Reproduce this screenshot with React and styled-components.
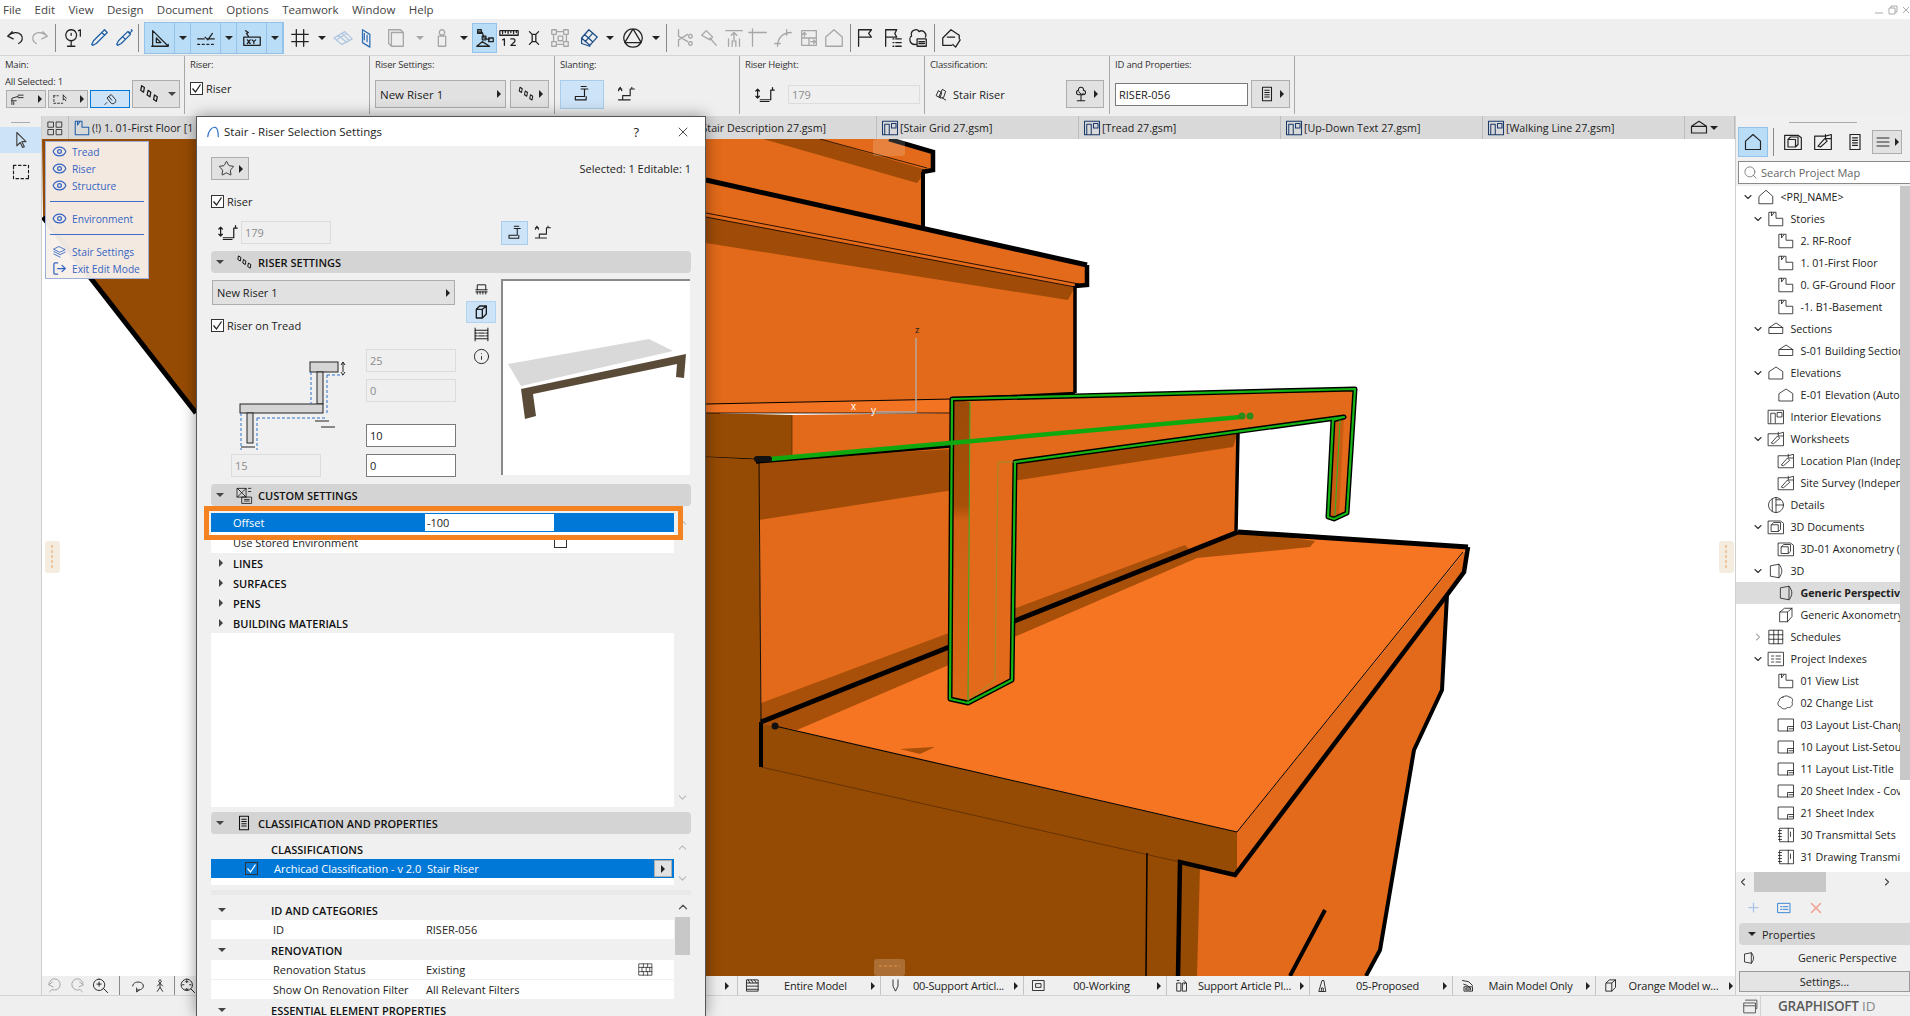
import React from 'react';
import styled, { createGlobalStyle } from 'styled-components';
import { Eye, LogOut, ChevronDown, ChevronRight, ChevronUp, ChevronLeft, Search, X, Plus, Star, Info } from 'lucide-react';

const GlobalStyle = createGlobalStyle`
  html, body { margin: 0; padding: 0; background: #efefef; }
  * { box-sizing: border-box; }
  body { font-family: "Open Sans", "Noto Sans", sans-serif; font-size: 11px; color: #1c1c1c; }
`;

const Page = styled.div`
  position: relative;
  width: 1910px;
  height: 1016px;
  display: flex;
  flex-direction: column;
  overflow: hidden;
  background: #efefef;
`;

const MenuBar = styled.div`
  height: 19px;
  background: #fff;
  display: flex;
  align-items: center;
  padding-left: 3px;
  gap: 13.4px;
  font-size: 11.5px;
  color: #444;
`;

const WinControls = styled.div`
  margin-left: auto;
  display: flex;
  align-items: center;
  padding-right: 1px;
`;

const Toolbar = styled.div`
  height: 37px;
  display: flex;
  align-items: center;
  border-bottom: 1px solid #d4d4d4;
  padding-top: 2px;
`;

const Cell = styled.div`
  width: ${p => p.$w}px;
  height: 30px;
  flex: none;
  display: flex;
  align-items: center;
  justify-content: center;
  color: ${p => p.$color || '#222'};
  opacity: ${p => (p.$faded ? 0.35 : 1)};
  background: ${p => (p.$on ? '#b9dcf7' : 'transparent')};
  border: ${p => (p.$on ? '1px solid #93c3ea' : 'none')};
  margin-left: ${p => p.$ml || 0}px;
`;

const BarSep = styled.div`
  width: ${p => p.$w}px;
  flex: none;
  height: 28px;
  display: flex;
  justify-content: center;
  &::after { content: ''; width: 1px; background: #8a8a8a; }
`;

const Tri = styled.span`
  display: inline-block;
  flex: none;
  width: 0;
  height: 0;
  border-style: solid;
  ${p => (p.$right
    ? `border-width: 4px 0 4px 4px; border-color: transparent transparent transparent ${p.$c || '#222'};`
    : `border-width: 4px 4px 0 4px; border-color: ${p.$c || '#222'} transparent transparent transparent;`)}
`;

const SnapGroup = styled.div`
  display: flex;
  margin-left: 4px;
  background: #b9dcf7;
  border: 1px solid #93c3ea;
  & > div { height: 30px; border-right: 1px solid #93c3ea; }
`;

const InfoBox = styled.div`
  height: 60px;
  display: flex;
`;

const InfoSection = styled.div`
  width: 185px;
  flex: none;
  border-right: 1px solid #a8a8a8;
  padding: 3px 5px 0;
  margin-bottom: 2px;
`;

const InfoLabel = styled.div`
  font-size: 9.5px;
  letter-spacing: -0.2px;
  color: #333;
  line-height: 12px;
`;

const InfoRow = styled.div`
  display: flex;
  align-items: center;
  gap: ${p => p.$gap || 0}px;
  margin-top: ${p => p.$mt || 0}px;
  padding-left: ${p => p.$pl || 0}px;
`;

const MainBody = styled.div`
  display: flex;
  align-items: flex-end;
  margin-top: 5px;
`;

const MainLeft = styled.div`
  width: 127px;
  flex: none;
`;

const SmallBtn = styled.div`
  width: ${p => p.$w}px;
  height: ${p => p.$h || 28}px;
  flex: none;
  display: flex;
  align-items: center;
  justify-content: ${p => (p.$between ? 'space-between' : 'center')};
  gap: 4px;
  padding: 0 ${p => p.$pad ?? 3}px;
  background: ${p => (p.$on ? '#cde3f7' : '#e1e1e1')};
  border: 1px solid ${p => (p.$on ? (p.$strong ? '#0078d7' : '#a8cdec') : '#adadad')};
  font-size: 11.5px;
`;

const BtnDivider = styled.span`
  width: 1px;
  height: 22px;
  background: #adadad;
`;

const TextField = styled.div`
  width: ${p => p.$w}px;
  height: ${p => p.$h || 23}px;
  flex: none;
  display: flex;
  align-items: center;
  padding-left: 3px;
  font-size: 11px;
  background: ${p => (p.$off ? '#efefef' : '#fff')};
  border: 1px solid ${p => (p.$off ? '#dcdcdc' : '#7a7a7a')};
  color: ${p => (p.$off ? '#8c8c8c' : '#1c1c1c')};
`;

const CheckBox = styled.span`
  width: 13px;
  height: 13px;
  flex: none;
  display: flex;
  align-items: center;
  justify-content: center;
  background: ${p => p.$bg || '#fff'};
  border: 1px solid #333;
`;

const Main = styled.div`
  flex: 1;
  min-height: 0;
  display: flex;
`;

const LeftDock = styled.div`
  width: 42px;
  flex: none;
  background: #efefef;
  border-right: 1px solid #cfcfcf;
`;

const Grip = styled.div`
  width: ${p => p.$w}px;
  height: 1px;
  background: #aaa;
  margin: 6px auto 4px;
`;

const DockTool = styled.div`
  height: 26px;
  display: flex;
  align-items: center;
  justify-content: center;
  margin-bottom: 6px;
  background: ${p => (p.$on ? '#cde3f7' : 'transparent')};
`;

const Center = styled.div`
  flex: 1;
  min-width: 0;
  display: flex;
  flex-direction: column;
`;

const TabBar = styled.div`
  height: 23px;
  flex: none;
  display: flex;
  background: #d9d9d9;
`;

const Tab = styled.div`
  width: ${p => p.$w}px;
  flex: none;
  display: flex;
  align-items: center;
  gap: 1px;
  padding-left: 4px;
  border-right: 1px solid #bdbdbd;
  font-size: 10.7px;
  color: #222;
  white-space: nowrap;
  overflow: hidden;
`;

const Viewport = styled.div`
  position: relative;
  flex: 1;
  min-height: 0;
  background: #fff;
`;

const Scene = styled.svg`
  display: block;
  width: 100%;
  height: 100%;
`;

const Popup = styled.div`
  position: absolute;
  left: 3px;
  top: 2px;
  width: 104px;
  height: 138px;
  padding: 1px 4px;
  background: rgba(248, 239, 233, 0.96);
  border: 1px solid #9cb0d8;
  color: #3565c4;
  font-size: 10.2px;
  white-space: nowrap;
`;

const PopItem = styled.div`
  height: 17px;
  display: flex;
  align-items: center;
  gap: 5px;
  padding-left: 2px;
`;

const PopLine = styled.div`
  height: 1px;
  background: #3f6cc4;
  margin: 7px 0 8px;
`;

const StatusBar = styled.div`
  height: 19px;
  flex: none;
  display: flex;
  background: #efefef;
`;

const NavTools = styled.div`
  width: 154px;
  flex: none;
  display: flex;
  align-items: center;
  padding-left: 1px;
`;

const StatusGap = styled.div`
  width: 542px;
  flex: none;
  display: flex;
  align-items: center;
  justify-content: flex-end;
  border-right: 1px solid #c4c4c4;
  padding-right: 8px;
`;

const StatusCell = styled.div`
  width: 143px;
  flex: none;
  display: flex;
  align-items: center;
  padding: 0 5px 0 7px;
  border-right: 1px solid #c4c4c4;
  font-size: 11px;
  letter-spacing: -0.2px;
  white-space: nowrap;
`;

const StatusText = styled.span`
  flex: 1;
  text-align: center;
  padding: 0 3px;
  overflow: hidden;
`;

const RightPanel = styled.div`
  width: 175px;
  flex: none;
  display: flex;
  flex-direction: column;
  background: #f0f0f0;
  border-left: 1px solid #cfcfcf;
`;

const PanelHead = styled.div`
  height: 45px;
  flex: none;
`;

const PanelIcons = styled.div`
  display: flex;
  align-items: center;
  height: 29px;
  padding-left: 2px;
  margin-top: 3px;
`;

const SearchBox = styled.div`
  height: 23px;
  flex: none;
  margin: 0 0 2px 2px;
  display: flex;
  align-items: center;
  gap: 3px;
  padding-left: 4px;
  background: #fff;
  border: 1px solid #8a8a8a;
  border-right: none;
  color: #666;
  font-size: 11px;
`;

const TreeWrap = styled.div`
  height: 686px;
  flex: none;
  display: flex;
`;

const Tree = styled.div`
  width: 164px;
  flex: none;
  background: #fff;
  overflow: hidden;
`;

const TreeRow = styled.div`
  height: 22px;
  display: flex;
  align-items: center;
  padding-left: ${p => 2 + p.$level * 10}px;
  background: ${p => (p.$sel ? '#dcdcdc' : 'transparent')};
  font-weight: ${p => (p.$sel ? 700 : 400)};
  font-size: 10.7px;
  color: #222;
  white-space: nowrap;
`;

const Chevron = styled.span`
  width: 19px;
  flex: none;
  display: flex;
  justify-content: center;
  color: ${p => p.$c || '#333'};
`;

const TreeIcon = styled.span`
  width: 20px;
  height: 18px;
  flex: none;
  margin-right: 3.5px;
  display: flex;
  align-items: center;
`;

const VScroll = styled.div`
  width: 10px;
  flex: none;
  display: flex;
  flex-direction: column;
  background: #fff;
`;

const VThumb = styled.div`
  height: ${p => p.$h}px;
  background: #c8c8c8;
`;

const HScroll = styled.div`
  height: 20px;
  flex: none;
  display: flex;
  align-items: center;
  padding-left: 1px;
  color: #444;
`;

const HThumb = styled.div`
  width: 72px;
  height: 100%;
  background: #c8c8c8;
  margin: 0 55px 0 5px;
`;

const PanelActions = styled.div`
  height: 31px;
  flex: none;
  display: flex;
  align-items: center;
  gap: 15px;
  padding-left: 10px;
`;

const PropsHead = styled.div`
  height: 22px;
  flex: none;
  margin-left: 3px;
  display: flex;
  align-items: center;
  gap: 6px;
  padding-left: 9px;
  background: #d6d6d6;
  border-radius: 4px 0 0 4px;
  font-size: 11px;
`;

const PropsRow = styled.div`
  height: 26px;
  flex: none;
  display: flex;
  align-items: center;
  padding-left: 6px;
  font-size: 10.7px;
`;

const PropsName = styled.span`
  margin-left: 42px;
`;

const SettingsBtn = styled.div`
  height: 21px;
  flex: none;
  margin-left: 3px;
  display: flex;
  align-items: center;
  justify-content: center;
  background: #e4e4e4;
  border: 1px solid #9a9a9a;
  font-size: 11px;
`;

const BottomBar = styled.div`
  height: 21px;
  flex: none;
  display: flex;
  align-items: center;
  justify-content: flex-end;
  border-top: 1px solid #d2d2d2;
  background: #efefef;
`;

const IdBlock = styled.div`
  width: 168px;
  height: 100%;
  display: flex;
  align-items: center;
  font-size: 13.5px;
  letter-spacing: -0.2px;
  font-weight: 600;
  color: #5a5a5a;
`;

const IdIcon = styled.span`
  width: 19px;
  height: 100%;
  margin-right: 17px;
  display: flex;
  align-items: center;
  border-right: 1px solid #d2d2d2;
`;

const IdLight = styled.span`
  font-weight: 400;
  color: #888;
`;

const Dialog = styled.div`
  position: absolute;
  left: 196px;
  top: 116px;
  width: 510px;
  height: 900px;
  background: #f0f0f0;
  border: 1px solid #565656;
  border-bottom: none;
  box-shadow: 0 0 14px rgba(0, 0, 0, 0.4);
  overflow: hidden;
`;

const DialogTitle = styled.div`
  height: 29px;
  background: #fff;
  display: flex;
  align-items: center;
  padding-left: 9px;
  gap: 4px;
  font-size: 11.5px;
  color: #222;
`;

const TitleButtons = styled.div`
  margin-left: auto;
  display: flex;
  align-items: center;
  gap: 36px;
  padding-right: 14px;
  font-size: 13px;
`;

const DialogBody = styled.div`
  padding: 0 14px;
`;

const FavRow = styled.div`
  margin-top: 11px;
  display: flex;
  align-items: center;
  justify-content: space-between;
  font-size: 11px;
`;

const CheckRow = styled.label`
  display: flex;
  align-items: center;
  gap: 3px;
  height: 13px;
  font-size: 11px;
  margin-top: ${p => p.$mt}px;
`;

const HeightRow = styled.div`
  margin-top: 13px;
  height: 23px;
  display: flex;
  align-items: center;
  padding-left: 7px;
`;

const HGap = styled.span`
  width: ${p => p.$w}px;
  flex: none;
`;

const SectionHead = styled.div`
  height: 22px;
  margin-top: ${p => p.$mt}px;
  display: flex;
  align-items: center;
  padding-left: 5px;
  background: #d4d4d4;
  border-radius: 4px;
  font-weight: 600;
  font-size: 11px;
  color: #111;
`;

const HeadIcon = styled.span`
  width: 22px;
  margin: 0 3px 0 9px;
  display: flex;
  justify-content: center;
`;

const RiserBlock = styled.div`
  margin-top: 6px;
  display: flex;
`;

const RiserLeft = styled.div`
  width: 244px;
  flex: none;
`;

const Dropdown = styled.div`
  height: 25px;
  margin: 1px 0 0 1px;
  display: flex;
  align-items: center;
  justify-content: space-between;
  padding: 0 4px;
  background: #e1e1e1;
  border: 1px solid #adadad;
  font-size: 11px;
`;

const DiagramGrid = styled.div`
  margin-top: 17px;
  display: flex;
`;

const DiagramCol = styled.div`
  width: 155px;
  flex: none;
`;

const DiagramSvg = styled.svg`
  display: block;
  width: 155px;
  height: 105px;
`;

const Indented = styled.div`
  margin-left: 20px;
`;

const FieldCol = styled.div`
  width: 89px;
`;

const FieldGap = styled.div`
  height: ${p => p.$h}px;
`;

const SideIcons = styled.div`
  width: 30px;
  margin-left: 11px;
  flex: none;
`;

const SideIcon = styled.div`
  height: 22px;
  display: flex;
  align-items: center;
  justify-content: center;
  background: ${p => (p.$on ? '#cde3f7' : 'transparent')};
  border: ${p => (p.$on ? '1px solid #b3d4ef' : 'none')};
`;

const PreviewBox = styled.div`
  width: 189px;
  height: 196px;
  margin-left: 5px;
  background: #fff;
  border-top: 2px solid #8a8a8a;
  border-left: 2px solid #8a8a8a;
`;

const PreviewSvg = styled.svg`
  display: block;
  width: 187px;
  height: 194px;
`;

const CustomList = styled.div`
  position: relative;
  margin-top: 7px;
  height: 294px;
  display: flex;
`;

const ListMain = styled.div`
  width: 463px;
  flex: none;
  background: #fff;
`;

const ListScroll = styled.div`
  flex: 1;
  display: flex;
  flex-direction: column;
  align-items: center;
  justify-content: space-between;
  color: #b8b8b8;
  padding: ${p => p.$pad};
`;

const OrangeFrame = styled.div`
  position: absolute;
  left: -7px;
  top: -7px;
  width: 479px;
  height: 34px;
  border: 5px solid #f58220;
  pointer-events: none;
`;

const OffsetRow = styled.div`
  position: relative;
  height: 19px;
  display: flex;
  align-items: center;
  background: #0078d7;
  color: #fff;
  padding-left: 22px;
  font-size: 11px;
`;

const OffsetInput = styled.div`
  position: absolute;
  left: 214px;
  top: 1px;
  width: 129px;
  height: 17px;
  padding-left: 2px;
  display: flex;
  align-items: center;
  background: #fff;
  color: #222;
`;

const PlainRow = styled.div`
  position: relative;
  height: 21px;
  display: flex;
  align-items: center;
  background: #fff;
  padding-left: 22px;
  font-size: 11px;
`;

const SmallBox = styled.span`
  position: absolute;
  left: 343px;
  top: 3px;
  width: 13px;
  height: 13px;
  background: #fff;
  border: 1px solid #333;
`;

const GroupRow = styled.div`
  height: 20px;
  display: flex;
  align-items: center;
  background: #f0f0f0;
  font-weight: 600;
  font-size: 11px;
  color: #111;
  padding-left: ${p => p.$pl || 7}px;
  gap: ${p => p.$gap || 0}px;
`;

const GroupTitle = styled.span`
  margin-left: ${p => p.$ml || 45}px;
`;

const ClassList = styled.div`
  margin-top: 5px;
  height: 46px;
  display: flex;
`;

const ClassRow = styled.div`
  height: 19px;
  display: flex;
  align-items: center;
  background: #0078d7;
  color: #fff;
  font-size: 11px;
  padding-left: 34px;
`;

const ClassName = styled.span`
  width: 153px;
  margin-left: 16px;
`;

const ClassBtn = styled.span`
  margin-left: auto;
  margin-right: 2px;
  width: 18px;
  height: 17px;
  display: flex;
  align-items: center;
  justify-content: center;
  background: #e1e1e1;
  border: 1px solid #adadad;
`;

const ThinSep = styled.div`
  height: 5px;
  margin-top: 5px;
  background: #e9e9e9;
`;

const PropList = styled.div`
  margin-top: 5px;
  display: flex;
`;

const PropRow = styled.div`
  height: 20px;
  display: flex;
  align-items: center;
  background: #fff;
  border-bottom: 1px solid #f0f0f0;
  padding-left: 62px;
  font-size: 11px;
`;

const PropKey = styled.span`
  width: 153px;
  flex: none;
`;

const PropVal = styled.span`
  width: 211px;
  flex: none;
`;

const PropScroll = styled.div`
  flex: 1;
  display: flex;
  flex-direction: column;
  align-items: center;
  color: #555;
`;

const PropThumb = styled.div`
  margin-top: 3px;
  width: 15px;
  height: 38px;
  background: #c8c8c8;
`;

const ClassValue = styled.span`
  flex: 1;
  margin-left: 4px;
  font-size: 11px;
`;

const Ico = styled.svg`
  display: block;
  flex: none;
  fill: none;
  stroke: currentColor;
  stroke-width: ${p => p.$sw || 1.4};
  stroke-linecap: round;
  stroke-linejoin: round;
`;

const paths = {
  undo: 'M9 5 4 10l6 3M4 10c5-5 12-5 15-1 2 3 1 7-3 9',
  redo: 'M15 5l5 5-6 3M20 10c-5-5-12-5-15-1-2 3-1 7 3 9',
  find: 'M10 3a6 6 0 1 0 .01 0M10 7v2M10 15v5M6 21h8M18 4l2-1v7',
  dropper: 'M18 3l3 3-3 3-3-3zM15 6l3 3-9 9-4 2-1-1 2-4z',
  syringe: 'M20 3l1 1-3 3M17 5l2 2M16 5l3 3-10 10-4 2-1-1 2-4zM11 11l2 2',
  tri: 'M4 4v17h17zM8 12v5h5zM3 21h3M21 21v-2',
  snap: 'M3 13h7M14 13h7M3 19h2M8 19h2M13 19h2M18 19h2M11 11l3 3 5-7',
  xy: 'M5 4l3 2-2 1 2 3M3 11h18v9H3zM7 14l3 4M10 14l-3 4M12 14l2 2v2M16 14l-2 2',
  grid: 'M8 3v18M16 3v18M3 8h18M3 16h18',
  plane: 'M2 12l12-7 8 8-11 6zM7 9l9 8M11 7l8 8M5 14l11-7',
  wall: 'M6 3l8 5v14l-8-5zM8 7v7M11 9v7',
  box: 'M4 3h13l3 3v15H7l-3-3zM7 6h13M7 6v15',
  person: 'M12 3a3 3 0 1 0 .01 0M8 21v-11h8v11z',
  guide: 'M4 5l5 1 2 6 6 2M4 3h4v4H4zM9 10h4v4H9zM16 12h5v4h-5zM3 21l6-5 8 5z',
  ruler: 'M2 4h20v5H2zM5 4v3M8 4v2M11 4v3M14 4v2M17 4v3M20 4v2M7 13v7M5 14l2-1M14 13h3c2 0 2 3 0 4l-3 3h5',
  target: 'M7 5l3 3h4l3-3M7 19l3-3h4l3 3M10 8v8M14 8v8',
  faded: 'M3 3h5v5H3zM16 3h5v5h-5zM3 16h5v5H3zM16 16h5v5h-5zM10 10h5v5h-5zM8 5h8M5 8v8M19 8v8M8 19h8',
  diamond: 'M13 3l9 8-8 9-9-8zM5 12v6l9 3M8 8l9 8M17 7l-8 9',
  shapes: 'M12 2a10 10 0 1 0 .01 0M12 2L3 17M12 2l9 15M4 17h16',
  scissors: 'M6 3v7M6 15v6M6 10l10 6M6 14l10-6M19 8a2 2 0 1 0 .01 0M19 16a2 2 0 1 0 .01 0',
  hammer: 'M4 9l5-5 7 7-3 3zM13 12l7 8',
  trimTop: 'M3 4h18M12 6v10M9 9l3-3 3 3M6 13v8M10 15v6M14 15v6M18 13v8',
  corner: 'M6 21V6h15M6 2v4M2 6h4',
  arc: 'M6 21c0-9 6-15 15-15M3 18h6M16 3v6',
  panel: 'M4 4h16v16H4zM4 12h16M12 12v8M7 10V7M5 8l2-2 2 2M14 16h5M17 14l2 2-2 2',
  house: 'M3 11l9-8 9 8v10H3z',
  flag: 'M5 21V3h14l-3 4 3 4H5',
  flagList: 'M4 21V3h12l-2 4 2 4H4M12 13h1M15 13h6M12 17h1M15 17h6M12 21h1M15 21h6',
  cloud: 'M10 19c-8 1-8-8-5-9-2-7 7-9 8-5 5-3 9 3 7 6M11 13h10v8H11zM13 16h6M13 18h6',
  houseCheck: 'M3 12l9-9 9 6v4M3 12v8h10M8 11h8M14 19l3 3 5-8',
  stair: 'M4 15h11V6M11 6h8M11 3h6M4 19h13M4 15v4M17 15v4',
  slant: 'M3 19h14M17 14h-9v5M17 14V6h5M19 4v2M3 8l2-4 2 4M3 6h4',
  riserH: 'M3 6v10M1 8l2-2 2 2M1 14l2 2 2-2M6 18h12V7h4M20 4v3M6 20h10',
  leaves: 'M5 14l3-7 5 3-2 7zM9 16l5-11 5 3-3 9-4 1zM14 18l5 3',
  tree: 'M12 21v-9M7 21h10M12 3c-3 0-4 3-3 4-4 0-4 6 0 6h6c4 0 4-6 0-6 1-1 0-4-3-4M12 12l-3-3M12 14l3-3',
  doc: 'M6 3h12v18H6zM9 7h6M9 10h6M9 13h6M9 16h6',
  menu: 'M3 6h18M3 12h18M3 18h18',
  tiles: 'M3 4h7v7H3zM14 4h7v7h-7zM3 14h7v7H3zM14 14h7v7h-7z',
  story: 'M3 3h9v8h9v10H3zM6 3v5l3-4',
  cursor: 'M7 3v16l4-4 3 6 2-1-3-6h5z',
  marquee: 'M3 4h3M9 4h3M15 4h3M21 4v3M21 10v3M21 16v3M18 20h3M12 20h3M6 20h3M3 20v-3M3 14v-3M3 8V4',
  marqueeArrow: 'M3 6h2M8 6h2M3 6v3M3 12v3M3 18h3M9 18h3M15 18h2M18 5v8l2-2 2 3M18 5l5 5',
  plank: 'M3 20V10l10-3M13 5h8M13 9h8M3 14h7M6 20v-4',
  magnet: 'M7 9l6-5 7 8c2 4-3 9-7 6zM9 7l5 6M3 20l3-3',
  stairLeaf: 'M3 8l8-4 10 5-8 4zM3 12l10 5 8-4M3 16l10 5',
  riserSet: 'M4 3l3 2-1 5-3-2zM11 8l3 2-1 5-3-2zM18 13l3 2-1 5-3-2z',
  wheel: 'M4 12c0-8 16-8 16 0 0 6-8 6-10 6M10 15v6l4-3',
  walk: 'M12 3a2 2 0 1 0 .01 0M12 8l-4 4M12 8l4 4M12 8v6l-4 6M12 14l4 6',
  fitAll: 'M11 3a8 8 0 1 0 .01 0M11 6v2M9 7l2-2 2 2M11 18v-2M9 17l2 2 2-2M5 11h2M15 11h2M17 17l5 5',
  zoomIn: 'M10 3a8 8 0 1 0 .01 0M10 7v6M7 10h6M16 16l6 6',
  undoZoom: 'M9 7l-5 4 6 3M4 11a8 8 0 1 1 5 7M8 18l-3 3',
  redoZoom: 'M15 7l5 4-6 3M20 11a8 8 0 1 0-5 7M16 18l3 3',
  hatch: 'M3 3h18v18H3zM3 8h18M3 13h18M3 18h18M5 3l3 5M10 3l3 5M15 3l3 5',
  pen: 'M8 3v10l4 8 4-8V3',
  layerBox: 'M3 4h18v16H3zM8 9h8v6H8z',
  planSet: 'M5 8h6v13H5zM14 8h6v13h-6zM5 4h3M16 4l3 3-3 3',
  reno: 'M3 21l5-17 3 0 3 17zM7 21v-5h3v5',
  modelOnly: 'M4 4l10 2 6 6M6 10l6 2 4 4M7 14h13v7H7zM10 16h7v3h-7z',
  cube: 'M5 8l5-5h10v12l-6 6H5zM5 8h9v13M14 8l6-5',
  section: 'M3 10l9-6 9 6v8H3zM3 10h18',
  elevation: 'M3 10l9-6 9 6v10H3z',
  interior: 'M2 3h20v18H2zM5 20V7h6v13M14 6h6v6h-6z',
  worksheet: 'M2 5h13l7-2v18H2zM6 17l8-9 3 3-8 7zM15 3v5h6',
  detail: 'M12 2a10 10 0 1 0 .01 0M7 4v16M12 2v20M12 12h10M12 5h6',
  doc3d: 'M2 4h16l4 3v14H2zM6 9h9v9H6zM6 9l3-3h9v9l-3 3',
  persp: 'M5 5l11-2c5 6 5 12 0 18L5 19zM16 3v18',
  axono: 'M4 8l6-5h10v11l-6 7H4zM4 8h10v13M14 8l6-5',
  table: 'M3 3h18v18H3zM3 9h18M3 15h18M9 3v18M15 3v18',
  index: 'M2 3h20v18H2zM6 8h3M6 12h3M6 16h3M12 8h6M12 12h6M12 16h6',
  change: 'M8 4c3-2 6-2 8 0 4 0 6 4 4 7 2 4-2 8-6 7-3 3-8 2-9-1-4 0-5-6-2-8 0-3 3-5 5-5z',
  layout: 'M2 4h20v16H2zM14 20v-6h8M16 17h6',
  transmittal: 'M4 3h18v18H4zM2 6h4M2 10h4M2 14h4M2 18h4M15 3v18M18 8v6',
  plusBox: 'M3 5h18v14H3zM7 10h2M7 14h2M11 10h7M11 14h7',
  browser: 'M5 3h16v12h-2M3 7h16v14H3zM3 11h16',
  brick: 'M3 4h18v16H3zM3 9h18M3 15h18M9 4v5M15 4v5M7 9v6M13 9v6M18 9v6M9 15v5M15 15v5',
  plan: 'M6 11V4h12v7M4 11h16M4 14h16M6 14v3M10 14v3M14 14v3M18 14v3',
  film: 'M3 3v18M21 3v18M3 6h18M3 18h18M8 10h8M8 14h8M3 10h3M18 10h3M3 14h3M18 14h3',
  customSet: 'M3 3h11v11H3zM3 3l11 11M14 3L3 14M17 3h3M17 7h3M9 14h12v8H9zM12 17h6M12 19h6',
  arcLogo: 'M3 20C4 10 10 3 16 4c4 1 5 8 5 16',
};

const Icon = ({ name, size = 22, sw, color }) => (
  <Ico viewBox="0 0 24 24" width={size} height={size} $sw={sw} style={color ? { color } : undefined}>
    <path d={paths[name]} />
  </Ico>
);

const topTools = [
  { w: 30, i: 'undo' }, { w: 20, i: 'redo', f: 1 }, { sep: 10 },
  { w: 26, i: 'find' }, { w: 26, i: 'dropper', c: '#1f5fa8' }, { w: 24, i: 'syringe', c: '#1f5fa8' }, { sep: 4 },
];
const snapTools = [
  { w: 30, i: 'tri' }, { w: 16, arrow: 1 }, { w: 30, i: 'snap' }, { w: 16, arrow: 1 }, { w: 30, i: 'xy' }, { w: 16, arrow: 1 },
];
const restTools = [
  { w: 32, i: 'grid' }, { w: 12, arrow: 1 }, { w: 30, i: 'plane', f: 1, c: '#3c7fc8' }, { w: 20, i: 'wall', c: '#2f6fb8' },
  { w: 36, i: 'box', f: 1 }, { w: 12, arrow: 1, f: 1 }, { w: 32, i: 'person', f: 1 }, { w: 12, arrow: 1 },
  { w: 25, i: 'guide', on: 1, ml: 2 }, { w: 24, i: 'ruler' }, { w: 26, i: 'target' }, { w: 26, i: 'faded', f: 1 },
  { w: 30, i: 'diamond', c: '#1f4f8a' }, { w: 14, arrow: 1 }, { w: 32, i: 'shapes' }, { w: 14, arrow: 1 }, { sep: 6 },
  { w: 30, i: 'scissors', f: 1 }, { w: 20, i: 'hammer', f: 1 }, { w: 30, i: 'trimTop', f: 1 }, { w: 18, i: 'corner', f: 1 },
  { w: 32, i: 'arc', f: 1 }, { w: 20, i: 'panel', f: 1 }, { w: 30, i: 'house', f: 1 }, { sep: 2 },
  { w: 28, i: 'flag' }, { w: 28, i: 'flagList' }, { w: 22, i: 'cloud' }, { sep: 10 }, { w: 24, i: 'houseCheck' },
];

const renderTool = (t, k) => {
  if (t.sep) return <BarSep key={k} $w={t.sep} />;
  if (t.arrow) return <Cell key={k} $w={t.w} $faded={t.f}><Tri /></Cell>;
  return <Cell key={k} $w={t.w} $faded={t.f} $on={t.on} $ml={t.ml} $color={t.c}><Icon name={t.i} /></Cell>;
};

const tree = [
  [0, 'o', 'house', '<PRJ_NAME>'],
  [1, 'o', 'story', 'Stories'],
  [2, '', 'story', '2. RF-Roof'],
  [2, '', 'story', '1. 01-First Floor'],
  [2, '', 'story', '0. GF-Ground Floor'],
  [2, '', 'story', '-1. B1-Basement'],
  [1, 'o', 'section', 'Sections'],
  [2, '', 'section', 'S-01 Building Section'],
  [1, 'o', 'elevation', 'Elevations'],
  [2, '', 'elevation', 'E-01 Elevation (Auto)'],
  [1, '', 'interior', 'Interior Elevations'],
  [1, 'o', 'worksheet', 'Worksheets'],
  [2, '', 'worksheet', 'Location Plan (Independent)'],
  [2, '', 'worksheet', 'Site Survey (Independent)'],
  [1, '', 'detail', 'Details'],
  [1, 'o', 'doc3d', '3D Documents'],
  [2, '', 'doc3d', '3D-01 Axonometry (Auto)'],
  [1, 'o', 'persp', '3D'],
  [2, '', 'persp', 'Generic Perspective', true],
  [2, '', 'axono', 'Generic Axonometry'],
  [1, 'c', 'table', 'Schedules'],
  [1, 'o', 'index', 'Project Indexes'],
  [2, '', 'story', '01 View List'],
  [2, '', 'change', '02 Change List'],
  [2, '', 'layout', '03 Layout List-Changes'],
  [2, '', 'layout', '10 Layout List-Setout'],
  [2, '', 'layout', '11 Layout List-Title'],
  [2, '', 'layout', '20 Sheet Index - Cover'],
  [2, '', 'layout', '21 Sheet Index'],
  [2, '', 'transmittal', '30 Transmittal Sets'],
  [2, '', 'transmittal', '31 Drawing Transmittal'],
];

const statusCells = [
  ['hatch', 'Entire Model'], ['pen', '00-Support Articl...'], ['layerBox', '00-Working'], ['planSet', 'Support Article Pl...'],
  ['reno', '05-Proposed'], ['modelOnly', 'Main Model Only'], ['cube', 'Orange Model w...'],
];

const Check = ({ color = '#222' }) => (
  <svg width="11" height="11" viewBox="0 0 11 11"><path d="M1.5 5.5 4.5 9 9.5 1.5" fill="none" stroke={color} strokeWidth="1.3" /></svg>
);

const railPoints = '952,399 1355,389 1347,513 1334,519 1328,517 1333,420 1344,417 1015,462 1012,680 968,703 950,699';

const StairScene = () => (
  <Scene viewBox="42 139 1693 837" preserveAspectRatio="none">
    <defs>
      <linearGradient id="legFace" x1="0" y1="0" x2="0" y2="1">
        <stop offset="0" stopColor="#9c4a08" />
        <stop offset="0.35" stopColor="#a85008" />
        <stop offset="0.4" stopColor="#cf6014" />
        <stop offset="1" stopColor="#dc6818" />
      </linearGradient>
    </defs>
    <polygon points="42,139 720,139 720,600 195,412 43,217" fill="#964b04" />
    <line x1="43" y1="217" x2="196" y2="413" stroke="#000" strokeWidth="5" />

    <polygon points="706,139 889,139 933,152 933,170 923,172 923,228 706,180" fill="#e26a1a" />
    <polygon points="763,139 820,139 927,170 917,183" fill="#a04c08" />
    <polyline points="820,139 927,168" stroke="#3a1a00" strokeWidth="1" fill="none" />
    <polyline points="889,139 933,152 933,170 922,172" stroke="#000" strokeWidth="4.5" fill="none" />
    <line x1="923" y1="172" x2="923" y2="228" stroke="#000" strokeWidth="4" />

    <polygon points="706,180 1086,266 1086,284 1075,285 1075,393 952,401 706,406" fill="#e26a1a" />
    <polygon points="706,217 1075,287 1068,300 706,243" fill="#a04c08" />
    <line x1="706" y1="213" x2="1079" y2="284" stroke="#2a1000" strokeWidth="1" />
    <line x1="706" y1="217" x2="1075" y2="287" stroke="#2a1000" strokeWidth="1" />
    <line x1="706" y1="180" x2="1087" y2="265" stroke="#000" strokeWidth="5" />
    <polyline points="1087,265 1087,285 1075,286" stroke="#000" strokeWidth="4.5" fill="none" />
    <line x1="1075" y1="286" x2="1075" y2="393" stroke="#000" strokeWidth="3.5" />

    <polygon points="706,404 952,399 952,413 706,413" fill="#f27321" />
    <polygon points="706,413 792,415 792,459 756,461 706,459" fill="#964b04" />
    <polygon points="792,415 952,413 952,452 792,461" fill="#e26a1a" />
    <line x1="706" y1="404" x2="952" y2="399" stroke="#000" strokeWidth="1" />
    <line x1="952" y1="399" x2="1075" y2="393" stroke="#000" strokeWidth="2.5" />
    <line x1="706" y1="413" x2="952" y2="413" stroke="#000" strokeWidth="0.8" />
    <line x1="792" y1="415" x2="792" y2="457" stroke="#5a2c00" strokeWidth="0.7" />
    <line x1="706" y1="457" x2="756" y2="459" stroke="#000" strokeWidth="0.8" />

    <polygon points="706,457 759,460 761,722 761,976 706,976" fill="#964b04" />
    <polygon points="759,460 1238,433 1236,532 761,722" fill="#e26a1a" />
    <polygon points="759,460 1238,433 1233,447 759,520" fill="#a04c08" />
    <polygon points="761,703 1185,545 1197,557 761,730" fill="#a84f0a" />
    <line x1="759" y1="460" x2="761" y2="722" stroke="#000" strokeWidth="0.9" />
    <line x1="1238" y1="433" x2="1236" y2="532" stroke="#000" strokeWidth="3.5" />

    <polygon points="775,726 1237,832 1237,880 1205,870 1205,976 761,976 761,725" fill="#964b04" />
    <line x1="761" y1="767" x2="1180" y2="862" stroke="#5a2c00" strokeWidth="0.8" />
    <polygon points="1237,875 1447,595 1442,690 1414,750 1380,950 1366,976 1197,976 1200,867" fill="#e26a1a" />
    <polygon points="1237,832 1468,547 1464,572 1447,595 1237,875" fill="#e26a1a" />
    <polygon points="761,722 1240,530 1468,547 1237,832 775,726" fill="#f57522" />
    <polygon points="761,722 1240,531 1315,541 1310,547 1197,558 1014,637 797,730 775,726" fill="#a84f0a" />
    <polygon points="900,749 935,747 920,754" fill="#a84f0a" />
    <line x1="775" y1="726" x2="1237" y2="832" stroke="#000" strokeWidth="1.1" />
    <line x1="1237" y1="832" x2="1463" y2="552" stroke="#000" strokeWidth="1" />
    <line x1="761" y1="722" x2="1238" y2="532" stroke="#000" strokeWidth="5" />
    <line x1="1238" y1="532" x2="1468" y2="547" stroke="#000" strokeWidth="5" />
    <polyline points="1468,547 1464,572 1447,595 1235,875 1180,862 1178,976" stroke="#000" strokeWidth="4.5" fill="none" />
    <polyline points="1447,595 1442,690 1414,750 1380,950 1366,976" stroke="#000" strokeWidth="4" fill="none" />
    <line x1="1325" y1="910" x2="1290" y2="976" stroke="#000" strokeWidth="4" />
    <line x1="1147" y1="853" x2="1146" y2="976" stroke="#000" strokeWidth="1.5" />
    <line x1="761" y1="722" x2="761" y2="767" stroke="#000" strokeWidth="4" />
    <circle cx="775" cy="726" r="3.5" fill="#111" />

    <polygon points={railPoints} fill="#e26a1a" />
    <polygon points="952,399 970,402 968,703 950,699" fill="url(#legFace)" />
    <polygon points="1333,420 1344,417 1339,517 1328,517" fill="#c85d12" />
    <polygon points={railPoints} fill="none" stroke="#000" strokeWidth="5" strokeLinejoin="round" />
    <polygon points={railPoints} fill="none" stroke="#15b515" strokeWidth="2.2" strokeLinejoin="round" />
    <line x1="970" y1="402" x2="968" y2="703" stroke="#28b428" strokeWidth="1" />
    <polyline points="1015,462 998,462 995,680 968,700" fill="none" stroke="#8a9a30" strokeWidth="0.8" />
    <line x1="1340" y1="420" x2="1335" y2="516" stroke="#28b428" strokeWidth="1" />
    <line x1="756" y1="462" x2="950" y2="446" stroke="#000" strokeWidth="3.5" />
    <line x1="770" y1="459" x2="1241" y2="417" stroke="#0fa80f" strokeWidth="4.5" />
    <circle cx="1242" cy="416" r="3.5" fill="#2a8a1a" />
    <circle cx="1250" cy="416" r="3.5" fill="#2a8a1a" />
    <rect x="754" y="456" width="18" height="6" rx="3" fill="#111" />

    <polyline points="916,338 916,412 876,412" fill="none" stroke="#b8a8a0" strokeWidth="1.4" />
    <text x="915" y="333" fontSize="9" fontFamily="Liberation Sans, sans-serif" fill="#222">z</text>
    <text x="851" y="410" fontSize="10" fontFamily="Liberation Sans, sans-serif" fill="#fff">x</text>
    <text x="871" y="414" fontSize="10" fontFamily="Liberation Sans, sans-serif" fill="#fff">y</text>

    <rect x="873" y="139" width="32" height="17" rx="3" fill="#fff" opacity="0.16" />
    <rect x="874" y="959" width="31" height="17" rx="3" fill="#fff" opacity="0.2" />
    <line x1="879" y1="966" x2="900" y2="966" stroke="#e8903a" strokeWidth="1" strokeDasharray="3 2" />
    <rect x="45" y="541" width="15" height="32" rx="3" fill="#f3ecdf" />
    <line x1="52" y1="545" x2="52" y2="569" stroke="#e8a060" strokeWidth="1" strokeDasharray="3 2" />
    <rect x="1719" y="541" width="15" height="32" rx="3" fill="#f3ecdf" />
    <line x1="1726" y1="545" x2="1726" y2="569" stroke="#e8a060" strokeWidth="1" strokeDasharray="3 2" />
  </Scene>
);

export default function App() {
  return (
    <Page>
      <GlobalStyle />
      <MenuBar>
        {['File', 'Edit', 'View', 'Design', 'Document', 'Options', 'Teamwork', 'Window', 'Help'].map(m => <span key={m}>{m}</span>)}
        <WinControls>
          <svg width="34" height="10" viewBox="0 0 34 10"><path d="M0 8h8M14 3h6v6h-6zM16 3V1h6v6h-2M28 2l6 6M34 2l-6 6" fill="none" stroke="#aaa" /></svg>
        </WinControls>
      </MenuBar>

      <Toolbar>
        {topTools.map(renderTool)}
        <SnapGroup>{snapTools.map(renderTool)}</SnapGroup>
        {restTools.map(renderTool)}
      </Toolbar>

      <InfoBox>
        <InfoSection>
          <InfoLabel>Main:</InfoLabel>
          <MainBody>
            <MainLeft>
              <InfoLabel>All Selected: 1</InfoLabel>
              <InfoRow $gap={2} $mt={2} $pl={1}>
                <SmallBtn $w={40} $h={18} $between><Icon name="plank" size={15} /><Tri $right /></SmallBtn>
                <SmallBtn $w={40} $h={18} $between><Icon name="marqueeArrow" size={15} /><Tri $right /></SmallBtn>
                <SmallBtn $w={40} $h={18} $on $strong><Icon name="magnet" size={15} /></SmallBtn>
              </InfoRow>
            </MainLeft>
            <SmallBtn $w={48} $pad={5} $between>
              <Icon name="riserSet" size={22} />
              <BtnDivider />
              <Tri $c="#444" />
            </SmallBtn>
          </MainBody>
        </InfoSection>
        <InfoSection>
          <InfoLabel>Riser:</InfoLabel>
          <InfoRow $mt={10} $gap={3}><CheckBox><Check /></CheckBox>Riser</InfoRow>
        </InfoSection>
        <InfoSection>
          <InfoLabel>Riser Settings:</InfoLabel>
          <InfoRow $mt={9} $gap={4}>
            <SmallBtn $w={131} $between $pad={4}>New Riser 1<Tri $right /></SmallBtn>
            <SmallBtn $w={39}><Icon name="riserSet" size={18} /><Tri $right /></SmallBtn>
          </InfoRow>
        </InfoSection>
        <InfoSection>
          <InfoLabel>Slanting:</InfoLabel>
          <InfoRow $mt={8} $gap={4}>
            <SmallBtn $w={44} $h={29} $on><Icon name="stair" size={20} /></SmallBtn>
            <Cell $w={36}><Icon name="slant" size={20} /></Cell>
          </InfoRow>
        </InfoSection>
        <InfoSection>
          <InfoLabel>Riser Height:</InfoLabel>
          <InfoRow $mt={13} $gap={12} $pl={10}>
            <Icon name="riserH" size={21} />
            <TextField $w={132} $h={19} $off>179</TextField>
          </InfoRow>
        </InfoSection>
        <InfoSection>
          <InfoLabel>Classification:</InfoLabel>
          <InfoRow $mt={9} $pl={3}>
            <Icon name="leaves" size={16} />
            <ClassValue>Stair Riser</ClassValue>
            <SmallBtn $w={38}><Icon name="tree" size={18} /><Tri $right /></SmallBtn>
          </InfoRow>
        </InfoSection>
        <InfoSection>
          <InfoLabel>ID and Properties:</InfoLabel>
          <InfoRow $mt={9} $gap={3}>
            <TextField $w={133}>RISER-056</TextField>
            <SmallBtn $w={39}><Icon name="doc" size={18} /><Tri $right /></SmallBtn>
          </InfoRow>
        </InfoSection>
      </InfoBox>

      <Main>
        <LeftDock>
          <Grip $w={19} />
          <DockTool $on><Icon name="cursor" size={20} color="#444" /></DockTool>
          <DockTool><Icon name="marquee" size={20} /></DockTool>
        </LeftDock>

        <Center>
          <TabBar>
            <Tab $w={27}><Icon name="tiles" size={18} sw={1.1} /></Tab>
            <Tab $w={202}><Icon name="story" size={18} color="#1f5fa8" />(!) 1. 01-First Floor [1</Tab>
            <Tab $w={202} />
            <Tab $w={202} />
            {['[Stair Description 27.gsm]', '[Stair Grid 27.gsm]', '[Tread 27.gsm]', '[Up-Down Text 27.gsm]', '[Walking Line 27.gsm]'].map(t => (
              <Tab key={t} $w={202}><Icon name="interior" size={18} color="#1a3a6a" />{t}</Tab>
            ))}
            <Tab $w={50}>
              <Icon name="section" size={20} />
              <Tri />
            </Tab>
          </TabBar>
          <Viewport>
            <StairScene />
            <Popup>
              <PopItem><Eye size={15} />Tread</PopItem>
              <PopItem><Eye size={15} />Riser</PopItem>
              <PopItem><Eye size={15} />Structure</PopItem>
              <PopLine />
              <PopItem><Eye size={15} />Environment</PopItem>
              <PopLine />
              <PopItem><Icon name="stairLeaf" size={15} />Stair Settings</PopItem>
              <PopItem><LogOut size={15} />Exit Edit Mode</PopItem>
            </Popup>
          </Viewport>
          <StatusBar>
            <NavTools>
              {[['undoZoom', 1, 22], ['redoZoom', 1, 24], ['zoomIn', 0, 23]].map(([n, f, w]) => (
                <Cell key={n} $w={w} $faded={f}><Icon name={n} size={17} /></Cell>
              ))}
              <BarSep $w={15} />
              <Cell $w={22}><Icon name="wheel" size={16} /></Cell>
              <Cell $w={22}><Icon name="walk" size={16} /></Cell>
              <BarSep $w={6} />
              <Cell $w={20}><Icon name="fitAll" size={17} /></Cell>
            </NavTools>
            <StatusGap><Tri $right /></StatusGap>
            {statusCells.map(([ic, t]) => (
              <StatusCell key={t}><Icon name={ic} size={15} /><StatusText>{t}</StatusText><Tri $right /></StatusCell>
            ))}
          </StatusBar>
        </Center>

        <RightPanel>
          <PanelHead>
            <Grip $w={68} />
            <PanelIcons>
              <Cell $w={30} $on><Icon name="house" size={20} /></Cell>
              <BarSep $w={10} />
              <Cell $w={30}><Icon name="doc3d" size={20} /></Cell>
              <Cell $w={30}><Icon name="worksheet" size={20} /></Cell>
              <Cell $w={34}><Icon name="doc" size={20} /></Cell>
              <SmallBtn $w={30} $h={24} $pad={2}><Icon name="menu" size={16} /><Tri $right /></SmallBtn>
            </PanelIcons>
          </PanelHead>
          <SearchBox><Search size={15} strokeWidth={1.2} />Search Project Map</SearchBox>
          <TreeWrap>
            <Tree>
              {tree.map(([lvl, st, ic, label, sel]) => (
                <TreeRow key={label} $level={lvl} $sel={sel}>
                  <Chevron $c={st === 'c' ? '#aaa' : undefined}>
                    {st === 'o' && <ChevronDown size={12} strokeWidth={2.2} />}
                    {st === 'c' && <ChevronRight size={12} strokeWidth={2.2} />}
                  </Chevron>
                  <TreeIcon><Icon name={ic} size={18} sw={1.1} /></TreeIcon>
                  {label}
                </TreeRow>
              ))}
            </Tree>
            <VScroll>
              <VThumb $h={594} />
            </VScroll>
          </TreeWrap>
          <HScroll>
            <ChevronLeft size={12} strokeWidth={2.2} />
            <HThumb />
            <ChevronRight size={12} strokeWidth={2.2} />
          </HScroll>
          <PanelActions>
            <Plus size={15} color="#a8c4ea" />
            <Icon name="plusBox" size={16} color="#2f7fd6" />
            <X size={18} color="#f0a090" />
          </PanelActions>
          <PropsHead><Tri />Properties</PropsHead>
          <PropsRow><Icon name="persp" size={14} /><PropsName>Generic Perspective</PropsName></PropsRow>
          <SettingsBtn>Settings...</SettingsBtn>
        </RightPanel>
      </Main>

      <BottomBar>
        <IdBlock>
          <IdIcon><Icon name="browser" size={17} /></IdIcon>
          <span>GRAPHISOFT <IdLight>ID</IdLight></span>
        </IdBlock>
      </BottomBar>

      <Dialog>
        <DialogTitle>
          <Icon name="arcLogo" size={14} sw={2} color="#2f6fc8" />
          Stair - Riser Selection Settings
          <TitleButtons><span>?</span><X size={16} strokeWidth={1.2} /></TitleButtons>
        </DialogTitle>
        <DialogBody>
          <FavRow>
            <SmallBtn $w={38} $h={23} $pad={2}><Star size={17} strokeWidth={1.2} /><Tri $right /></SmallBtn>
            <span>Selected: 1 Editable: 1</span>
          </FavRow>
          <CheckRow $mt={15}><CheckBox><Check /></CheckBox>Riser</CheckRow>
          <HeightRow>
            <Icon name="riserH" size={21} />
            <HGap $w={2} />
            <TextField $w={90} $off>179</TextField>
            <HGap $w={170} />
            <SmallBtn $w={27} $h={24} $on $pad={1}><Icon name="stair" size={18} /></SmallBtn>
            <Cell $w={28}><Icon name="slant" size={19} /></Cell>
          </HeightRow>

          <SectionHead $mt={7}><Tri $c="#444" /><HeadIcon><Icon name="riserSet" size={17} /></HeadIcon>RISER SETTINGS</SectionHead>
          <RiserBlock>
            <RiserLeft>
              <Dropdown>New Riser 1<Tri $right /></Dropdown>
              <CheckRow $mt={14}><CheckBox><Check /></CheckBox>Riser on Tread</CheckRow>
              <DiagramGrid>
                <DiagramCol>
                  <DiagramSvg viewBox="0 0 155 105">
                    <g stroke="#222" strokeWidth="1" fill="#d5d5d5">
                      <rect x="99" y="13" width="28" height="10" />
                      <rect x="106" y="23" width="6" height="32" />
                      <rect x="29" y="55" width="83" height="9" />
                      <rect x="36" y="64" width="6" height="30" />
                    </g>
                    <g stroke="#2f6fc8" strokeWidth="1" strokeDasharray="3 2" fill="none">
                      <path d="M100 23v32M116 26v40M116 26h16M46 69h70M46 69v32M30 64v37" />
                    </g>
                    <g stroke="#222" strokeWidth="1" fill="none">
                      <path d="M132 13v10M130 16l2-3 2 3M130 23l2 3 2-3M104 72h14M110 78h14M30 98h14" />
                    </g>
                  </DiagramSvg>
                  <Indented><TextField $w={90} $off>15</TextField></Indented>
                </DiagramCol>
                <FieldCol>
                  <TextField $w={90} $off>25</TextField>
                  <FieldGap $h={7} />
                  <TextField $w={90} $off>0</TextField>
                  <FieldGap $h={22} />
                  <TextField $w={90}>10</TextField>
                  <FieldGap $h={7} />
                  <TextField $w={90}>0</TextField>
                </FieldCol>
              </DiagramGrid>
            </RiserLeft>
            <SideIcons>
              <SideIcon><Icon name="plan" size={17} /></SideIcon>
              <SideIcon $on><Icon name="cube" size={16} sw={2} /></SideIcon>
              <SideIcon><Icon name="film" size={17} /></SideIcon>
              <SideIcon><Info size={17} strokeWidth={1.3} /></SideIcon>
            </SideIcons>
            <PreviewBox>
              <PreviewSvg viewBox="0 0 187 194">
                <polygon points="5,83 146,58 170,70 18,105" fill="#d9d9d9" />
                <polygon points="18,108 183,73 181,97 173,96 174,83 30,113 33,135 22,138" fill="#5a4a38" />
              </PreviewSvg>
            </PreviewBox>
          </RiserBlock>

          <SectionHead $mt={7}><Tri $c="#444" /><HeadIcon><Icon name="customSet" size={19} sw={1} /></HeadIcon>CUSTOM SETTINGS</SectionHead>
          <CustomList>
            <ListMain>
              <OffsetRow>Offset<OffsetInput>-100</OffsetInput></OffsetRow>
              <PlainRow>Use Stored Environment<SmallBox /></PlainRow>
              {['LINES', 'SURFACES', 'PENS', 'BUILDING MATERIALS'].map(t => (
                <GroupRow key={t} $gap={10} $pl={8}><Tri $right $c="#444" />{t}</GroupRow>
              ))}
            </ListMain>
            <ListScroll $pad="3px 0">
              <ChevronUp size={13} />
              <ChevronDown size={13} />
            </ListScroll>
            <OrangeFrame />
          </CustomList>

          <SectionHead $mt={5}><Tri $c="#444" /><HeadIcon><Icon name="doc" size={18} /></HeadIcon>CLASSIFICATION AND PROPERTIES</SectionHead>
          <ClassList>
            <ListMain>
              <GroupRow><GroupTitle $ml={53}>CLASSIFICATIONS</GroupTitle></GroupRow>
              <ClassRow>
                <CheckBox $bg="#0078d7"><Check color="#fff" /></CheckBox>
                <ClassName>Archicad Classification - v 2.0</ClassName>
                Stair Riser
                <ClassBtn><Tri $right /></ClassBtn>
              </ClassRow>
            </ListMain>
            <ListScroll $pad="2px 0 0">
              <ChevronUp size={13} />
              <ChevronDown size={13} />
            </ListScroll>
          </ClassList>
          <ThinSep />
          <PropList>
            <ListMain>
              <GroupRow><Tri $c="#444" /><GroupTitle>ID AND CATEGORIES</GroupTitle></GroupRow>
              <PropRow><PropKey>ID</PropKey>RISER-056</PropRow>
              <GroupRow><Tri $c="#444" /><GroupTitle>RENOVATION</GroupTitle></GroupRow>
              <PropRow><PropKey>Renovation Status</PropKey><PropVal>Existing</PropVal><Icon name="brick" size={17} sw={1} /></PropRow>
              <PropRow><PropKey>Show On Renovation Filter</PropKey>All Relevant Filters</PropRow>
              <GroupRow><Tri $c="#444" /><GroupTitle>ESSENTIAL ELEMENT PROPERTIES</GroupTitle></GroupRow>
            </ListMain>
            <PropScroll>
              <ChevronUp size={14} strokeWidth={2.2} />
              <PropThumb />
            </PropScroll>
          </PropList>
        </DialogBody>
      </Dialog>
    </Page>
  );
}
